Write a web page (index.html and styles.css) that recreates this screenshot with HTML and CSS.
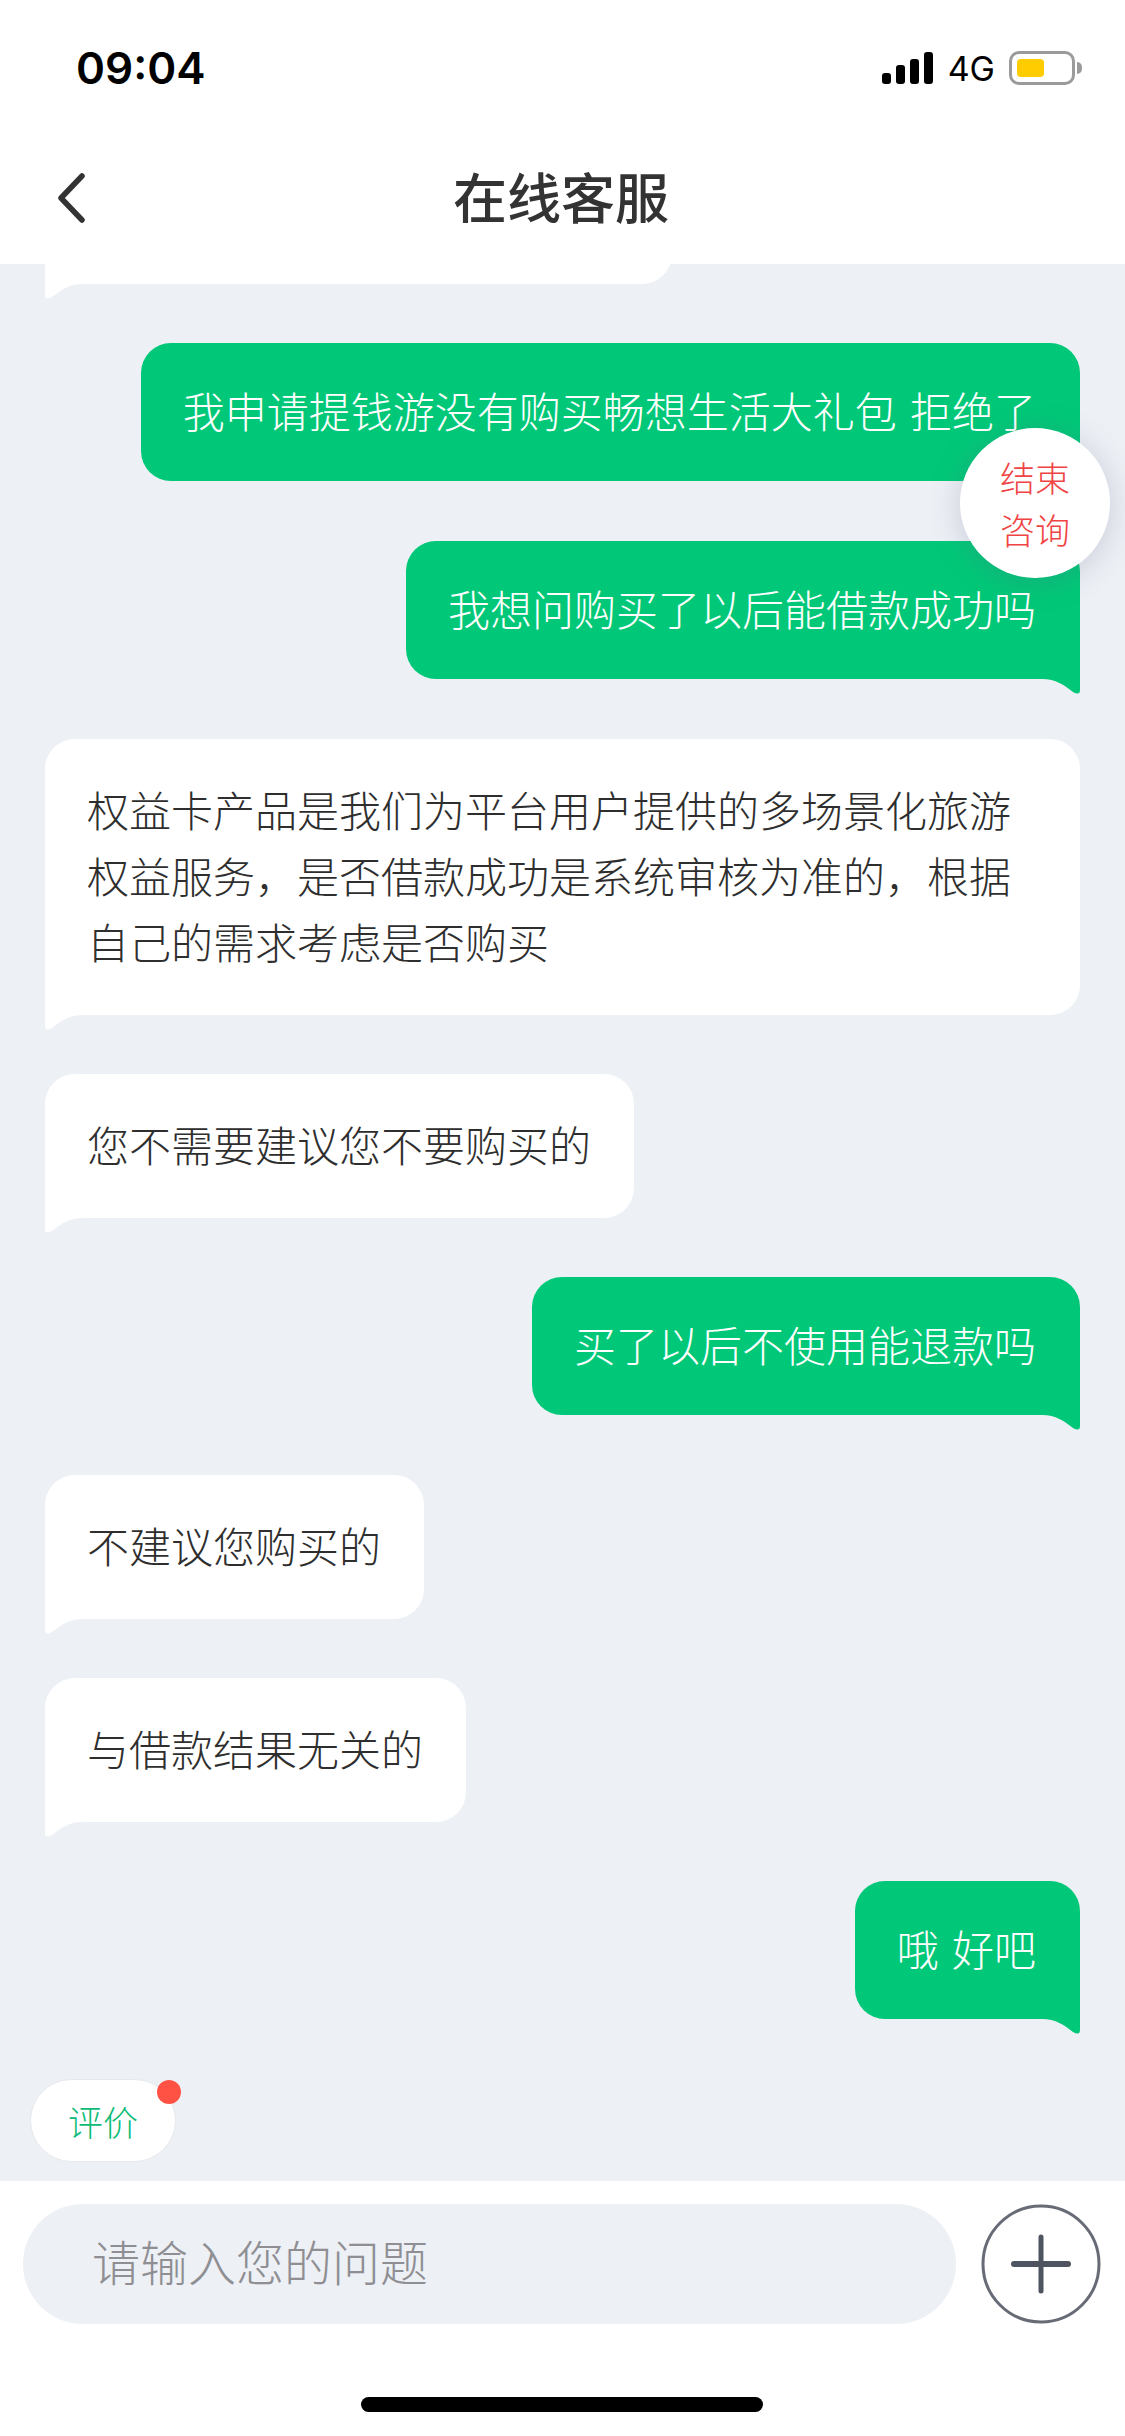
FILE: index.html
```html
<!DOCTYPE html>
<html lang="zh-CN">
  <head>
    <meta charset="UTF-8" />
    <meta name="viewport" content="width=device-width, initial-scale=1.0" />
    <title>在线客服</title>
    <link rel="stylesheet" href="styles.css">
  </head>
  <body>
    <div class="page">
      <div class="status-bar">
        <span class="time">09:04</span>
        <div class="status-icons">
          <div class="signal">
            <i class="bar-1"></i><i class="bar-2"></i><i class="bar-3"></i><i class="bar-4"></i>
          </div>
          <span class="network">4G</span>
          <div class="battery"><div class="battery-level"></div></div>
          <div class="battery-cap"></div>
        </div>
      </div>

      <div class="nav-bar">
        <svg class="back" width="30" height="50" viewBox="0 0 30 50">
          <path d="M27 3 L6 25 L27 47" fill="none" stroke="#333" stroke-width="5.5" stroke-linecap="round" stroke-linejoin="round" />
        </svg>
        <h1 class="title">在线客服</h1>
      </div>

      <div class="chat">
        <div class="bubble left cut-off"></div>
        <div class="bubble right">我申请提钱游没有购买畅想生活大礼包 拒绝了</div>
        <div class="bubble right">我想问购买了以后能借款成功吗</div>
        <div class="bubble left">权益卡产品是我们为平台用户提供的多场景化旅游权益服务，是否借款成功是系统审核为准的，根据自己的需求考虑是否购买</div>
        <div class="bubble left">您不需要建议您不要购买的</div>
        <div class="bubble right">买了以后不使用能退款吗</div>
        <div class="bubble left">不建议您购买的</div>
        <div class="bubble left">与借款结果无关的</div>
        <div class="bubble right">哦 好吧</div>
        <button type="button" class="rate-btn">评价<span class="red-dot"></span></button>
        <button type="button" class="end-btn">结束<br>咨询</button>
      </div>

      <div class="footer">
        <div class="input-row">
          <div class="input-box">请输入您的问题</div>
          <svg class="plus" width="120" height="120" viewBox="0 0 120 120">
            <circle cx="60" cy="60" r="58" fill="#fff" stroke="#666b76" stroke-width="3" />
            <path d="M33 60 H87" stroke="#4e5460" stroke-width="6" stroke-linecap="round" />
            <path d="M60 33 V87" stroke="#4e5460" stroke-width="5" stroke-linecap="round" />
          </svg>
        </div>
        <div class="home-bar"></div>
      </div>
    </div>
  </body>
</html>
```

FILE: styles.css
```css
* {
  box-sizing: border-box;
}
body {
  margin: 0;
  background-color: #fff;
  font-family: "Noto Sans CJK SC", "Noto Sans", sans-serif;
}
.page {
  width: 1125px;
  height: 2436px;
  display: flex;
  flex-direction: column;
  overflow: hidden;
}

/* status bar */
.status-bar {
  height: 136px;
  flex-shrink: 0;
  padding: 0 43px 0 76px;
  display: flex;
  align-items: center;
  justify-content: space-between;
}
.time {
  font-family: Inter, Roboto, sans-serif;
  font-size: 44px;
  font-weight: 600;
  color: #000;
}
.status-icons {
  display: flex;
  align-items: center;
}
.signal {
  display: flex;
  align-items: flex-end;
  gap: 5px;
  height: 32px;
}
.signal i {
  width: 9px;
  background-color: #000;
  border-radius: 3px;
}
.bar-1 {
  height: 11px;
}
.bar-2 {
  height: 19px;
}
.bar-3 {
  height: 25px;
}
.bar-4 {
  height: 32px;
}
.network {
  margin: 0 14px 0 15px;
  font-family: Inter, Roboto, sans-serif;
  font-size: 34px;
  color: #000;
}
.battery {
  width: 66px;
  height: 34px;
  padding: 5px;
  border: 3px solid #9b9b9b;
  border-radius: 10px;
}
.battery-level {
  width: 27px;
  height: 100%;
  background-color: #ffcc00;
  border-radius: 4px;
}
.battery-cap {
  width: 5px;
  height: 12px;
  margin-left: 2px;
  background-color: #9b9b9b;
  border-radius: 0 6px 6px 0;
}

/* nav */
.nav-bar {
  height: 128px;
  flex-shrink: 0;
  padding: 0 0 10px 55px;
  display: flex;
  align-items: center;
}
.back {
  margin-top: 6px;
}
.title {
  flex: 1;
  margin: 0 88px 0 0;
  font-size: 54px;
  font-weight: 500;
  color: #333;
  text-align: center;
}

/* chat */
.chat {
  flex: 1;
  min-height: 0;
  padding: 0 45px 19px;
  background-color: #edf0f5;
  display: flex;
  flex-direction: column;
  justify-content: flex-end;
  align-items: flex-start;
  gap: 59px;
  position: relative;
  overflow: hidden;
}
.bubble {
  flex-shrink: 0;
  font-size: 42px;
  font-weight: 300;
  line-height: 66px;
  word-spacing: 4px;
  border-radius: 30px;
  position: relative;
}
.bubble::after {
  content: "";
  position: absolute;
  top: 100%;
  width: 38px;
  height: 15px;
}
.left {
  padding: 37px 43px 41px 42px;
  background-color: #fff;
  color: #2e2e2e;
  border-bottom-left-radius: 0;
}
.left::after {
  left: 0;
  background-color: #fff;
  clip-path: path("M0 0 H38 C24 0 16 6 7 13 Q0 17 0 11 Z");
}
.cut-off {
  width: 627px;
  height: 144px;
}
.right {
  align-self: flex-end;
  padding: 34px 44px 38px 42px;
  background-color: #00c878;
  color: #fff;
  border-bottom-right-radius: 0;
}
.right::after {
  right: 0;
  background-color: #00c878;
  clip-path: path("M38 0 H0 C14 0 22 6 31 13 Q38 17 38 11 Z");
}
.right + .left,
.right + .right {
  margin-top: 1px;
}
.rate-btn {
  flex-shrink: 0;
  width: 146px;
  height: 83px;
  margin: 1px 0 0 -15px;
  padding: 0;
  background-color: #fff;
  border: 1px solid #e6e8ec;
  border-radius: 42px;
  color: #0dbb77;
  font-family: inherit;
  font-size: 35px;
  font-weight: 300;
  position: relative;
}
.red-dot {
  position: absolute;
  top: 0;
  right: -6px;
  width: 24px;
  height: 24px;
  background-color: #ff5245;
  border-radius: 50%;
}
.end-btn {
  position: absolute;
  top: 164px;
  left: 960px;
  width: 150px;
  height: 150px;
  padding: 0;
  background-color: #fff;
  border: none;
  border-radius: 50%;
  box-shadow: 0 4px 30px rgba(90, 100, 130, 0.25);
  color: #f04444;
  font-family: inherit;
  font-size: 35px;
  font-weight: 300;
  line-height: 52px;
}

/* footer */
.footer {
  height: 255px;
  flex-shrink: 0;
  padding: 23px 24px 0 23px;
  display: flex;
  flex-direction: column;
  align-items: center;
}
.input-row {
  width: 100%;
  display: flex;
  align-items: center;
  justify-content: space-between;
}
.input-box {
  width: 933px;
  height: 120px;
  padding-left: 69px;
  background-color: #edf0f5;
  border-radius: 60px;
  color: #8e8e93;
  font-size: 48px;
  font-weight: 300;
  line-height: 113px;
}
.home-bar {
  width: 402px;
  height: 15px;
  margin-top: 73px;
  background-color: #000;
  border-radius: 8px;
}
```
